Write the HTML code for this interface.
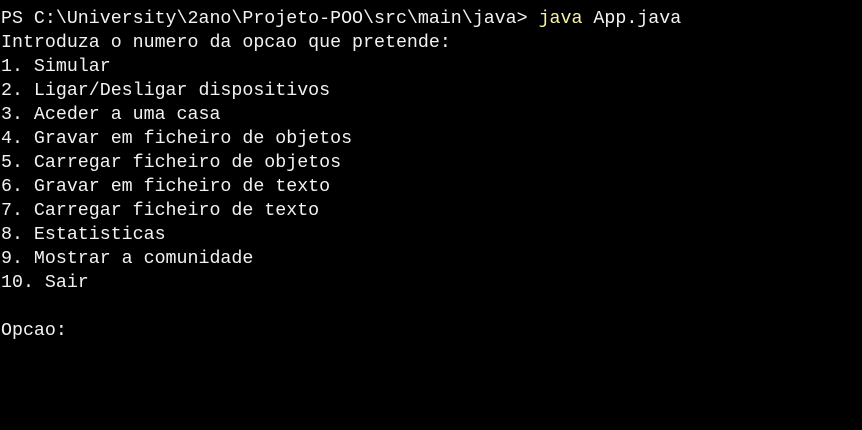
<!DOCTYPE html>
<html><head><style>
html,body{margin:0;padding:0;background:#000;width:862px;height:430px;overflow:hidden}
pre{margin:0;padding:7px 0 0 1px;font-family:"Liberation Mono",monospace;font-size:18.3px;line-height:24px;color:#f2f2f2;white-space:pre}
.y{color:#f9f1a5}
</style></head><body><pre>PS C:\University\2ano\Projeto-POO\src\main\java&gt; <span class="y">java</span> App.java
Introduza o numero da opcao que pretende:
1. Simular
2. Ligar/Desligar dispositivos
3. Aceder a uma casa
4. Gravar em ficheiro de objetos
5. Carregar ficheiro de objetos
6. Gravar em ficheiro de texto
7. Carregar ficheiro de texto
8. Estatisticas
9. Mostrar a comunidade
10. Sair

Opcao:</pre></body></html>
